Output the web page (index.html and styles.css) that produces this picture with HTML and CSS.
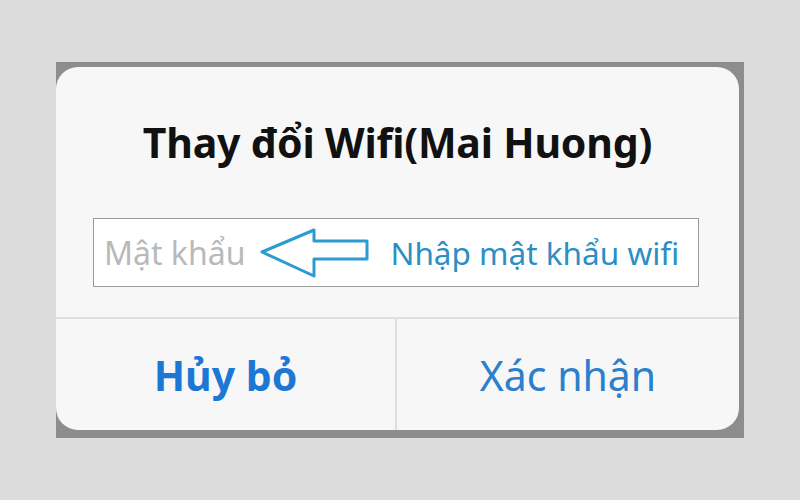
FILE: index.html
```html
<!DOCTYPE html>
<html lang="vi">
<head>
<meta charset="utf-8">
<link rel="stylesheet" href="styles.css">
</head>
<body>
<div class="frame">
  <div class="card">
    <h1 class="title">Thay đổi Wifi(Mai Huong)</h1>
    <div class="field">
      <span class="placeholder">Mật khẩu</span>
      <svg class="arrow" width="110" height="50" viewBox="0 0 110 50">
        <polygon points="3,24 55,2 55,13 108,13 108,31 55,31 55,48" fill="none" stroke="#2b9bd1" stroke-width="3" stroke-linejoin="round"/>
      </svg>
      <span class="hint">Nhập mật khẩu wifi</span>
    </div>
    <div class="actions">
      <div class="btn cancel">Hủy bỏ</div>
      <div class="btn ok">Xác nhận</div>
    </div>
  </div>
</div>
</body>
</html>
```
FILE: styles.css
```css
html, body {
  margin: 0;
  padding: 0;
}
body {
  width: 800px;
  height: 500px;
  background: #dcdcdc;
  font-family: "Noto Sans", "Open Sans", sans-serif;
  overflow: hidden;
}
.frame {
  margin: 62px 0 0 56px;
  width: 688px;
  height: 376px;
  box-sizing: border-box;
  padding: 5px 5px 8px 0;
  background: #8d8d8d;
}
.card {
  height: 100%;
  background: #f7f7f7;
  border-radius: 22px;
  display: flex;
  flex-direction: column;
}
.title {
  margin: 0;
  padding-top: 50px;
  height: 99px;
  box-sizing: border-box;
  text-align: center;
  font-size: 41px;
  font-weight: 700;
  color: #111;
  line-height: 50px;
  letter-spacing: -0.2px;
}
.field {
  margin: 52px 40px 0 37px;
  height: 69px;
  box-sizing: border-box;
  border: 1px solid #9a9a9a;
  background: #fff;
  display: flex;
  align-items: center;
  padding-left: 10px;
}
.placeholder {
  font-size: 32px;
  color: #b9b9b9;
}
.arrow {
  margin-left: 14px;
  flex: none;
}
.hint {
  margin-left: 21px;
  font-size: 31.5px;
  color: #2b8fc4;
}
.actions {
  margin-top: 30px;
  flex: 1;
  border-top: 2px solid #dedede;
  display: flex;
}
.btn {
  display: flex;
  align-items: center;
  justify-content: center;
  font-size: 41px;
  color: #2a80cc;
}
.cancel {
  width: 339px;
  border-right: 2px solid #dedede;
  font-weight: 700;
  color: #1c78d4;
}
.ok {
  flex: 1;
}
```
